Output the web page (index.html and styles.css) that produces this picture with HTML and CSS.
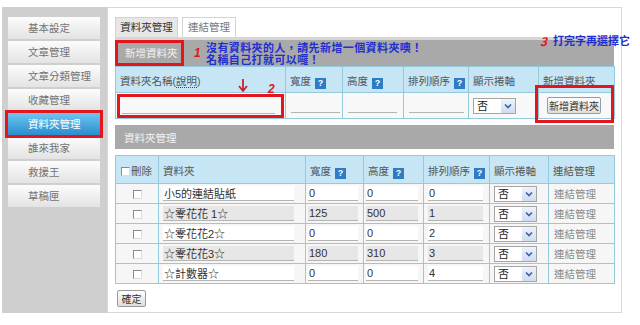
FILE: index.html
```html
<!DOCTYPE html>
<html>
    <head>
    <title>資料夾管理</title>
    <meta charset="utf-8">
    <link rel="stylesheet" href="styles.css">
    </head>
    <body>
        <div class="page">
            <ul class="sideMenu">
                <li><a>基本設定</a></li>
                <li><a>文章管理</a></li>
                <li><a>文章分類管理</a></li>
                <li><a>收藏管理</a></li>
                <li class="active"><a>資料夾管理</a></li>
                <li><a>誰來我家</a></li>
                <li><a>救援王</a></li>
                <li><a>草稿匣</a></li>
            </ul>

            <div class="panel">
                <div class="tabs">
                    <span class="tab tabOn">資料夾管理</span>
                    <span class="tab tabOff">連結管理</span>
                </div>

                <!-- 新增資料夾 -->
                <div class="bar barAdd">
                    <span class="barTitle markBox">新增資料夾</span>
                    <span class="step stepOne">1</span>
                    <p class="hint">沒有資料夾的人，請先新增一個資料夾噢！<br>名稱自己打就可以囉！</p>
                </div>
                <table class="grid gridAdd">
                    <colgroup>
                        <col style="width:170px"><col style="width:57px"><col style="width:61px">
                        <col style="width:65px"><col style="width:70px"><col style="width:76px">
                    </colgroup>
                    <tr class="head">
                        <td>資料夾名稱(<span class="dotted">說明</span>)</td>
                        <td>寬度<span class="q">?</span></td>
                        <td>高度<span class="q">?</span></td>
                        <td>排列順序<span class="q">?</span></td>
                        <td>顯示捲軸</td>
                        <td>新增資料夾</td>
                    </tr>
                    <tr class="addRow">
                        <td class="nameCell"><div class="markBox nameMark"><input class="field fName" value=""></div></td>
                        <td><input class="field fNum" value=""></td>
                        <td><input class="field fNum" value=""></td>
                        <td><input class="field fOrder" value=""></td>
                        <td><div class="select"><span>否</span><span class="arrow"><svg width="8" height="6" viewBox="0 0 8 6"><path d="M1 1.5 L4 4.5 L7 1.5" fill="none" stroke="#3c62a8" stroke-width="1.6"/></svg></span></div></td>
                        <td><button class="btn btnAdd">新增資料夾</button></td>
                    </tr>
                </table>

                <!-- 資料夾管理 -->
                <div class="bar barList">
                    <span class="barTitle">資料夾管理</span>
                </div>
                <table class="grid gridList">
                    <colgroup>
                        <col style="width:43px"><col style="width:147px"><col style="width:58px">
                        <col style="width:60px"><col style="width:66px"><col style="width:59px"><col style="width:66px">
                    </colgroup>
                    <tr class="head">
                        <td><span class="check"></span>刪除</td>
                        <td>資料夾</td>
                        <td>寬度<span class="q">?</span></td>
                        <td>高度<span class="q">?</span></td>
                        <td>排列順序<span class="q">?</span></td>
                        <td>顯示捲軸</td>
                        <td>連結管理</td>
                    </tr>
                    <tr>
                        <td class="center"><span class="check"></span></td>
                        <td><input class="field lName" value="小5的連結貼紙"></td>
                        <td><input class="field lW" value="0"></td>
                        <td><input class="field lH" value="0"></td>
                        <td><input class="field lOrder" value="0"></td>
                        <td><div class="select"><span>否</span><span class="arrow"><svg width="8" height="6" viewBox="0 0 8 6"><path d="M1 1.5 L4 4.5 L7 1.5" fill="none" stroke="#3c62a8" stroke-width="1.6"/></svg></span></div></td>
                        <td class="link">連結管理</td>
                    </tr>
                    <tr class="alt">
                        <td class="center"><span class="check"></span></td>
                        <td><input class="field lName" value="☆零花花 1☆"></td>
                        <td><input class="field lW" value="125"></td>
                        <td><input class="field lH" value="500"></td>
                        <td><input class="field lOrder" value="1"></td>
                        <td><div class="select"><span>否</span><span class="arrow"><svg width="8" height="6" viewBox="0 0 8 6"><path d="M1 1.5 L4 4.5 L7 1.5" fill="none" stroke="#3c62a8" stroke-width="1.6"/></svg></span></div></td>
                        <td class="link">連結管理</td>
                    </tr>
                    <tr>
                        <td class="center"><span class="check"></span></td>
                        <td><input class="field lName" value="☆零花花2☆"></td>
                        <td><input class="field lW" value="0"></td>
                        <td><input class="field lH" value="0"></td>
                        <td><input class="field lOrder" value="2"></td>
                        <td><div class="select"><span>否</span><span class="arrow"><svg width="8" height="6" viewBox="0 0 8 6"><path d="M1 1.5 L4 4.5 L7 1.5" fill="none" stroke="#3c62a8" stroke-width="1.6"/></svg></span></div></td>
                        <td class="link">連結管理</td>
                    </tr>
                    <tr class="alt">
                        <td class="center"><span class="check"></span></td>
                        <td><input class="field lName" value="☆零花花3☆"></td>
                        <td><input class="field lW" value="180"></td>
                        <td><input class="field lH" value="310"></td>
                        <td><input class="field lOrder" value="3"></td>
                        <td><div class="select"><span>否</span><span class="arrow"><svg width="8" height="6" viewBox="0 0 8 6"><path d="M1 1.5 L4 4.5 L7 1.5" fill="none" stroke="#3c62a8" stroke-width="1.6"/></svg></span></div></td>
                        <td class="link">連結管理</td>
                    </tr>
                    <tr>
                        <td class="center"><span class="check"></span></td>
                        <td><input class="field lName" value="☆計數器☆"></td>
                        <td><input class="field lW" value="0"></td>
                        <td><input class="field lH" value="0"></td>
                        <td><input class="field lOrder" value="4"></td>
                        <td><div class="select"><span>否</span><span class="arrow"><svg width="8" height="6" viewBox="0 0 8 6"><path d="M1 1.5 L4 4.5 L7 1.5" fill="none" stroke="#3c62a8" stroke-width="1.6"/></svg></span></div></td>
                        <td class="link">連結管理</td>
                    </tr>
                </table>
                <button class="btn btnOk">確定</button>

                <!-- annotations drawn over the page -->
                <span class="noteArrow"><svg width="10" height="13" viewBox="0 0 10 13"><path d="M5 0 V11 M1 7 L5 12 L9 7" fill="none" stroke="#c8262a" stroke-width="1.8"/></svg></span>
                <span class="step stepTwo">2</span>
                <div class="noteThree"><span class="step">3</span><span class="noteText">打完字再選擇它</span></div>
                <div class="markBox btnMark"></div>
            </div>
        </div>
    </body>
</html>
```

FILE: styles.css
```css
        *
        {
            box-sizing: border-box;
        }
        body
        {
            margin: 0;
            background: #fff;
            color: #444;
            font-family: "Liberation Sans", "Noto Sans CJK TC", sans-serif;
            font-size: 11px;
        }
        .page
        {
            display: flex;
            padding: 7px 0 0 2px;
        }

        /* left menu */
        .sideMenu
        {
            list-style: none;
            margin: 0;
            width: 105px;
            padding: 10px 0 0 6px;
            background: #cfcfcf;
        }
        .sideMenu li
        {
            margin-bottom: 2px;
        }
        .sideMenu a
        {
            display: block;
            width: 92px;
            height: 22px;
            line-height: 22px;
            padding-left: 20px;
            color: #737373;
            font-size: 10.5px;
            background: linear-gradient(#fcfcfc, #e3e3e3);
        }
        .sideMenu .active a
        {
            color: #fff;
            background: linear-gradient(#6fc6ef, #2a8dcf);
            outline: 3px solid #e3151d;
        }

        /* right panel */
        .panel
        {
            position: relative;
            width: 515px;
            height: 306px;
            border: 1px solid #d8d8d8;
            padding: 9px 7px 0 7px;
        }
        .tabs
        {
            display: flex;
            gap: 4px;
            height: 20px;
        }
        .tab
        {
            height: 20px;
            line-height: 19px;
            text-align: center;
            font-size: 10.5px;
            border: 1px solid #d2d2d2;
            border-bottom: none;
        }
        .tabOn
        {
            width: 63px;
            background: #e7e7e7;
            color: #333;
        }
        .tabOff
        {
            width: 54px;
            background: #fff;
            color: #777;
        }

        .bar
        {
            display: flex;
            align-items: center;
            background: #a9a9a9;
        }
        .barAdd
        {
            height: 29px;
            border-top: 3px solid #d6d6d6;
        }
        .barList
        {
            height: 24px;
            margin-top: 6px;
            padding-left: 9px;
        }
        .barTitle
        {
            color: #f2f2f2;
            font-size: 10.5px;
        }
        .barAdd .barTitle
        {
            width: 69px;
            height: 26px;
            line-height: 20px;
            padding-left: 7px;
        }
        .markBox
        {
            border: 3px solid #e3151d;
        }
        .step
        {
            color: #e3151d;
            font-style: italic;
            font-weight: bold;
            font-size: 12px;
        }
        .stepOne
        {
            margin-left: 10px;
            width: 12px;
        }
        .hint
        {
            margin: 0;
            color: #1f2fd0;
            font-weight: bold;
            font-size: 11px;
            letter-spacing: 0.4px;
            line-height: 12.5px;
            font-family: "Noto Sans CJK TC", sans-serif;
        }

        /* tables */
        .grid
        {
            width: 499px;
            table-layout: fixed;
            border-collapse: collapse;
            border: 1px solid #86c2d6;
        }
        .grid td
        {
            border: 1px solid #94cadc;
            padding: 0 0 0 4px;
            white-space: nowrap;
            background: #f6f6f6;
        }
        .grid .head td
        {
            background: #c6e6f6;
            color: #555;
            font-size: 10.5px;
            padding-top: 2px;
        }
        .gridAdd .head td
        {
            height: 26px;
        }
        .gridAdd .addRow td
        {
            height: 25px;
            background: #f8f8f8;
        }
        .gridList
        {
            margin-top: 6px;
        }
        .gridList .head td
        {
            height: 28px;
        }
        .gridList tr td
        {
            height: 20px;
        }
        .grid td.center
        {
            text-align: center;
            padding-left: 0;
        }
        .grid td.link
        {
            color: #8a8a8a;
            font-size: 10.5px;
            padding-left: 5px;
        }
        .dotted
        {
            border-bottom: 1px dotted #444;
        }
        .q
        {
            display: inline-block;
            width: 11px;
            height: 11px;
            margin-left: 4px;
            background: #2f7cc4;
            color: #fff;
            font-size: 9px;
            font-weight: bold;
            line-height: 11px;
            text-align: center;
            vertical-align: -1px;
        }
        .check
        {
            display: inline-block;
            width: 9px;
            height: 9px;
            background: #fff;
            border: 1px solid;
            border-color: #8a8a8a #dedede #dedede #8a8a8a;
            vertical-align: -1px;
        }
        .head .check
        {
            margin: 0 1px 0 1px;
        }

        .field
        {
            height: 15px;
            border: none;
            border-bottom: 1px solid #b4b4b4;
            background: #fff;
            padding: 0 1px;
            color: #333;
            font-family: "Liberation Sans", "Noto Sans CJK TC", sans-serif;
            font-size: 11px;
            vertical-align: middle;
        }
        .alt .field
        {
            background: #e7e7e7;
        }
        .gridAdd .field
        {
            background: transparent;
        }
        .nameCell
        {
            padding: 1px 1px 0 1px !important;
        }
        .nameMark
        {
            height: 24px;
            padding: 2px 0 0 2px;
        }
        .fName { width: 153px; }
        .fNum { width: 49px; margin-left: 1px; }
        .fOrder { width: 55px; margin-left: 1px; }
        .lName { width: 131px; }
        .lW { width: 50px; margin-left: -2px; }
        .lH { width: 52px; margin-left: -2px; }
        .lOrder { width: 55px; }

        .select
        {
            display: flex;
            width: 43px;
            height: 16px;
            border: 1px solid #a5a5a5;
            background: #fff;
            color: #222;
            line-height: 14px;
        }
        .select span:first-child
        {
            flex: 1;
            padding-left: 3px;
        }
        .select .arrow
        {
            display: flex;
            align-items: center;
            justify-content: center;
            width: 14px;
            background: linear-gradient(#eef3fb, #cfdcf1);
        }

        .btn
        {
            height: 17px;
            padding: 0;
            border: 1px solid #9a9a9a;
            border-radius: 2px;
            background: linear-gradient(#fefefe, #dedede);
            color: #333;
            font-family: "Noto Sans CJK TC", sans-serif;
            font-size: 10px;
            line-height: 15px;
        }
        .btnAdd
        {
            width: 54px;
            margin-left: 4px;
        }
        .btnOk
        {
            display: block;
            width: 29px;
            margin: 6px 0 0 2px;
        }

        /* annotations */
        .noteArrow
        {
            position: absolute;
            left: 130px;
            top: 71px;
        }
        .stepTwo
        {
            position: absolute;
            left: 160px;
            top: 74px;
        }
        .noteThree
        {
            position: absolute;
            left: 432px;
            top: 24px;
            display: flex;
            gap: 6px;
            color: #1f2fd0;
            font-weight: bold;
            font-size: 11px;
            font-family: "Noto Sans CJK TC", sans-serif;
            white-space: nowrap;
        }
        .btnMark
        {
            position: absolute;
            left: 427px;
            top: 77px;
            width: 79px;
            height: 38px;
        }
```
